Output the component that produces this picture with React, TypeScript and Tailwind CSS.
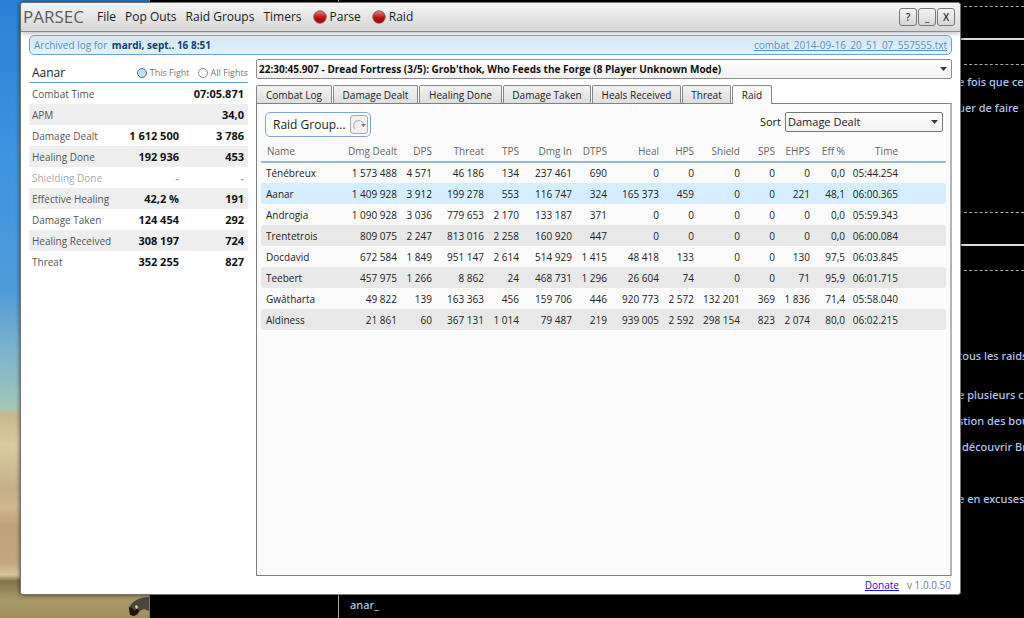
import clsx from 'clsx';
import { useState } from 'react';
import type { ReactNode } from 'react';

const MENU = ['File', 'Pop Outs', 'Raid Groups', 'Timers'];

const TABS = [
  { label: 'Combat Log', width: 'w-[76px]' },
  { label: 'Damage Dealt', width: 'w-[85px]' },
  { label: 'Healing Done', width: 'w-[83px]' },
  { label: 'Damage Taken', width: 'w-[88px]' },
  { label: 'Heals Received', width: 'w-[89px]' },
  { label: 'Threat', width: 'w-[49px]' },
  { label: 'Raid', width: 'w-[40px]' },
];

const STATS = [
  { label: 'Combat Time', total: '', rate: '07:05.871' },
  { label: 'APM', total: '', rate: '34,0' },
  { label: 'Damage Dealt', total: '1 612 500', rate: '3 786' },
  { label: 'Healing Done', total: '192 936', rate: '453' },
  { label: 'Shielding Done', total: '-', rate: '-', muted: true },
  { label: 'Effective Healing', total: '42,2 %', rate: '191' },
  { label: 'Damage Taken', total: '124 454', rate: '292' },
  { label: 'Healing Received', total: '308 197', rate: '724' },
  { label: 'Threat', total: '352 255', rate: '827' },
];

const COLUMNS = [
  { label: 'Name', width: 'w-[86px]' },
  { label: 'Dmg Dealt', width: 'w-[50px]' },
  { label: 'DPS', width: 'w-[35px]' },
  { label: 'Threat', width: 'w-[52px]' },
  { label: 'TPS', width: 'w-[35px]' },
  { label: 'Dmg In', width: 'w-[53px]' },
  { label: 'DTPS', width: 'w-[35px]' },
  { label: 'Heal', width: 'w-[52px]' },
  { label: 'HPS', width: 'w-[35px]' },
  { label: 'Shield', width: 'w-[46px]' },
  { label: 'SPS', width: 'w-[35px]' },
  { label: 'EHPS', width: 'w-[35px]' },
  { label: 'Eff %', width: 'w-[35px]' },
  { label: 'Time', width: 'w-[53px]' },
];

const RAIDERS = [
  ['Ténébreux', '1 573 488', '4 571', '46 186', '134', '237 461', '690', '0', '0', '0', '0', '0', '0,0', '05:44.254'],
  ['Aanar', '1 409 928', '3 912', '199 278', '553', '116 747', '324', '165 373', '459', '0', '0', '221', '48,1', '06:00.365'],
  ['Androgia', '1 090 928', '3 036', '779 653', '2 170', '133 187', '371', '0', '0', '0', '0', '0', '0,0', '05:59.343'],
  ['Trentetrois', '809 075', '2 247', '813 016', '2 258', '160 920', '447', '0', '0', '0', '0', '0', '0,0', '06:00.084'],
  ['Docdavid', '672 584', '1 849', '951 147', '2 614', '514 929', '1 415', '48 418', '133', '0', '0', '130', '97,5', '06:03.845'],
  ['Teebert', '457 975', '1 266', '8 862', '24', '468 731', '1 296', '26 604', '74', '0', '0', '71', '95,9', '06:01.715'],
  ['Gwâtharta', '49 822', '139', '163 363', '456', '159 706', '446', '920 773', '2 572', '132 201', '369', '1 836', '71,4', '05:58.040'],
  ['Aldiness', '21 861', '60', '367 131', '1 014', '79 487', '219', '939 005', '2 592', '298 154', '823', '2 074', '80,0', '06:02.215'],
];

const PLAYER = 'Aanar';

function RecordDot() {
  return (
    <svg aria-hidden="true" className="size-[14px]" viewBox="0 0 14 14">
      <defs>
        <linearGradient id="record" x1="0" x2="0" y1="0" y2="1">
          <stop offset="0" stopColor="#e98a8a" />
          <stop offset="0.4" stopColor="#d02a2a" />
          <stop offset="0.6" stopColor="#b80c0c" />
          <stop offset="1" stopColor="#a30808" />
        </linearGradient>
      </defs>
      <circle cx="7" cy="7" fill="url(#record)" r="6.2" stroke="#7d4a4a" strokeWidth="0.9" />
    </svg>
  );
}

function Caret() {
  return (
    <svg
      aria-hidden="true"
      className="pointer-events-none absolute top-2 right-[5px] h-1 w-[7px]"
      viewBox="0 0 7 4"
    >
      <path d="M0 0h7L3.5 4z" fill="#3c3c3c" />
    </svg>
  );
}

function WindowButton({ label, children }: { label: string; children: ReactNode }) {
  return (
    <button
      aria-label={label}
      className="flex h-[18px] w-[18px] items-center justify-center rounded-[3px] border border-[#777] bg-linear-to-b from-[#f4f4f4] to-[#d6d6d6] text-[10px] font-semibold leading-none text-[#333]"
      type="button"
    >
      {children}
    </button>
  );
}

function TitleBar() {
  return (
    <header className="flex h-[29px] shrink-0 items-center rounded-t-[3px] border-b border-[#8a8a8a] bg-linear-to-b from-[#f5f5f5] to-[#d6d6d6] pr-[5px] pl-0.5 shadow-[0_2px_4px_rgba(0,0,0,0.22)]">
      <h1 className="w-[74px] text-[17px] leading-5 text-[#5c5c5c]">PARSEC</h1>
      <nav className="flex items-center gap-[9px] text-[12px] text-[#1c1c1c]">
        {MENU.map((item) => (
          <button key={item} type="button">
            {item}
          </button>
        ))}
        <button className="ml-0.5 flex items-center gap-[3px]" type="button">
          <RecordDot />
          Parse
        </button>
        <button className="ml-0.5 flex items-center gap-[3px]" type="button">
          <RecordDot />
          Raid
        </button>
      </nav>
      <div className="ml-auto flex gap-px">
        <WindowButton label="Help">?</WindowButton>
        <WindowButton label="Minimize">_</WindowButton>
        <WindowButton label="Close">X</WindowButton>
      </div>
    </header>
  );
}

function ScopeRadio({
  label,
  checked,
  onChange,
}: {
  label: string;
  checked: boolean;
  onChange: () => void;
}) {
  return (
    <label className="flex items-center gap-[3px]">
      <input
        checked={checked}
        className="size-[10px] appearance-none rounded-full border border-[#8a8a8a] bg-white checked:border-[#56708a] checked:bg-[#c3dcf0]"
        name="scope"
        onChange={onChange}
        type="radio"
      />
      {label}
    </label>
  );
}

function StatsPanel() {
  const [scope, setScope] = useState('this');

  return (
    <aside className="w-[219px] shrink-0">
      <div className="flex h-[24px] items-center justify-between border-b border-[#6c9acb] pt-1 pl-[3px]">
        <h2 className="text-[12px] text-[#222]">Aanar</h2>
        <div className="flex gap-2 text-[9px] text-[#777]">
          <ScopeRadio
            checked={scope === 'this'}
            label="This Fight"
            onChange={() => setScope('this')}
          />
          <ScopeRadio
            checked={scope === 'all'}
            label="All Fights"
            onChange={() => setScope('all')}
          />
        </div>
      </div>
      <table className="w-full table-fixed text-[11px] leading-4">
        <tbody>
          {STATS.map((stat) => (
            <tr
              className={clsx(
                'h-[21px] even:bg-[#eee]',
                stat.muted ? 'text-[#aaa]' : 'text-[#555]'
              )}
              key={stat.label}
            >
              <th
                className="w-[97px] pl-[3px] text-left text-[10px] font-normal whitespace-nowrap"
                scope="row"
              >
                {stat.label}
              </th>
              <td
                className={clsx(
                  'w-[53px] text-right font-bold whitespace-nowrap',
                  !stat.muted && 'text-[#111]'
                )}
              >
                {stat.total}
              </td>
              <td
                className={clsx(
                  'pr-1 text-right font-bold whitespace-nowrap',
                  !stat.muted && 'text-[#111]'
                )}
              >
                {stat.rate}
              </td>
            </tr>
          ))}
        </tbody>
      </table>
    </aside>
  );
}

function RaidTable() {
  return (
    <table className="w-full table-fixed text-[10px] leading-4 whitespace-nowrap">
      <thead>
        <tr className="h-[21px] border-b-2 border-[#94b8e0] text-[#666]">
          {COLUMNS.map((column) => (
            <th
              className={clsx(
                column.width,
                'p-0 text-right font-normal first:pl-[6px] first:text-left'
              )}
              key={column.label}
              scope="col"
            >
              {column.label}
            </th>
          ))}
          <td />
        </tr>
      </thead>
      <tbody>
        {RAIDERS.map((raider) => (
          <tr className="group h-[21px] text-[#222]" key={raider[0]}>
            {raider.map((value, index) => (
              <td
                className={clsx(
                  'p-0 text-right first:rounded-l-[3px] first:pl-[5px] first:text-left',
                  raider[0] === PLAYER ? 'bg-[#d4eeff]' : 'group-even:bg-[#e8e8e8]'
                )}
                key={COLUMNS[index].label}
              >
                {value}
              </td>
            ))}
            <td
              className={clsx(
                'rounded-r-[3px]',
                raider[0] === PLAYER ? 'bg-[#d4eeff]' : 'group-even:bg-[#e8e8e8]'
              )}
            />
          </tr>
        ))}
      </tbody>
    </table>
  );
}

function RaidToolbar() {
  return (
    <div className="flex items-start justify-between pr-[3px] pl-1">
      <div className="flex h-[25px] items-center gap-1 rounded-[5px] border border-[#7ba6d8] bg-white pr-0.5 pl-[7px]">
        <button className="text-[12px] text-[#222]" type="button">
          Raid Group...
        </button>
        <button
          aria-label="Refresh raid group"
          className="flex h-[19px] w-[18px] items-center justify-center rounded-[3px] border border-[#aaa] bg-[#f1f1f1]"
          type="button"
        >
          <svg aria-hidden="true" className="h-3 w-[14px] shrink-0" viewBox="0 0 14 12">
            <path d="M3 10A5 5 0 1 1 11.500 5.500" fill="none" stroke="#bdbdbd" strokeWidth="1.300" />
            <path d="M9 5h5l-2.500 3z" fill="#777" />
          </svg>
        </button>
      </div>
      <div className="flex items-center gap-1 text-[11px] text-[#222]">
        <label htmlFor="sort">Sort</label>
        <div className="relative">
          <select
            className="block h-[20px] w-[158px] appearance-none rounded-[2px] border border-[#777] bg-linear-to-b from-[#fcfcfc] to-[#f2f2f2] px-0.5 text-[11px] leading-4"
            defaultValue="Damage Dealt"
            id="sort"
          >
            <option>Damage Dealt</option>
            <option>Healing Done</option>
            <option>Threat</option>
          </select>
          <Caret />
        </div>
      </div>
    </div>
  );
}

function FightPanel() {
  const [tab, setTab] = useState('Raid');

  return (
    <main className="flex min-w-0 flex-1 flex-col">
      <div className="relative">
        <select
          aria-label="Fight"
          className="block h-5 w-full appearance-none rounded-[2px] border border-[#8c8c8c] bg-linear-to-b from-white to-[#f2f2f2] px-0.5 text-[10px] leading-4 font-bold text-[#111]"
        >
          <option>
            22:30:45.907 - Dread Fortress (3/5): Grob'thok, Who Feeds the Forge (8 Player Unknown Mode)
          </option>
        </select>
        <Caret />
      </div>
      <div className="mt-[6px] flex gap-px" role="tablist">
        {TABS.map(({ label, width }) => (
          <button
            aria-selected={tab === label}
            className={clsx(
              width,
              'h-[18px] rounded-t-[2px] border border-b-0 border-[#888] text-center text-[10px] leading-4 whitespace-nowrap text-[#222]',
              tab === label
                ? 'z-10 -mb-px h-[19px] bg-[#fafafa]'
                : 'bg-linear-to-b from-[#f2f2f2] to-[#dedede]'
            )}
            key={label}
            onClick={() => setTab(label)}
            role="tab"
            type="button"
          >
            {label}
          </button>
        ))}
      </div>
      <section className="flex flex-1 flex-col border border-r-2 border-[#808080] border-r-[#b4b4b4] bg-[#fafafa] px-1 pt-2">
        <RaidToolbar />
        <div className="mt-1">
          <RaidTable />
        </div>
      </section>
    </main>
  );
}

function ParsecWindow() {
  return (
    <div className="absolute top-0.5 right-[63px] bottom-[23px] left-5 flex flex-col rounded-[3px] border border-[#777] bg-white shadow-[0_0_4px_rgba(0,0,0,0.6)]">
      <TitleBar />
      <div className="flex flex-1 flex-col px-2 pt-[3px]">
        <div className="z-10 flex h-5 items-center justify-between rounded-[5px] border border-[#6fa0d2] bg-linear-to-b from-[#d0e6f3] to-[#e0f4ff] px-1 text-[10px] text-[#5d90c0]">
          <p>
            Archived log for{' '}
            <strong className="ml-0.5 text-[#0f3f70]">mardi, sept.. 16 8:51</strong>
          </p>
          <a className="underline" href="#log">
            combat_2014-09-16_20_51_07_557555.txt
          </a>
        </div>
        <div className="flex flex-1 gap-2 pt-1">
          <StatsPanel />
          <FightPanel />
        </div>
      </div>
      <footer className="flex h-[18px] shrink-0 items-center justify-end gap-2 pr-[9px] text-[10px]">
        <a className="text-[#1414e0] underline" href="#donate">
          Donate
        </a>
        <span className="text-[#777]">v 1.0.0.50</span>
      </footer>
    </div>
  );
}

function Desktop() {
  return (
    <div className="flex w-[150px] shrink-0 items-end justify-end border-r border-[#777] bg-[linear-gradient(to_bottom,#2b80d8_0,#3f93e0_25%,#4f9bd8_47%,#7db4cc_57%,#a2c7b8_66%,#c9b68c_67%,#dccba0_72%,#c4b08a_79%,#cdb98c_82%,#bfa27c_85%,#c2a782_91%,#d6c59a_93%,#85754a_94%,#a8996a_97%,#a08f5c_100%)]">
      <svg aria-hidden="true" className="h-[22px] w-[21px]" viewBox="0 0 21 22">
        <path
          d="M21 1C11 1 4 5 1 12l1 5 3 3 4-1 3-4 4-2 5 2z"
          fill="#4a463c"
        />
        <path d="M1 11l3 1 3 3 2-3 2 3-2 3-3 2-4-1z" fill="#1d120d" />
        <path d="M7 10l2-1 1 3-2 1z" fill="#d8cfae" />
      </svg>
    </div>
  );
}

function Dashes() {
  return <div className="ml-[6px] border-t border-dashed border-[#aaa]" />;
}

function Console() {
  return (
    <div className="flex min-w-0 flex-1 bg-black font-['Noto_Sans',sans-serif] text-[11px] leading-[13px] font-medium text-[#b4c6f0]">
      <div className="w-[189px] shrink-0 border-r border-[#aaa]" />
      <div className="flex min-w-0 flex-1 items-end pb-[7px] pl-[11px]">anar_</div>
      <div className="w-[66px] shrink-0 overflow-hidden pt-[6px] whitespace-nowrap">
        <Dashes />
        <div className="mt-[31px] h-0.5 bg-[#ddd]" />
        <div className="mt-6">
          <Dashes />
        </div>
        <p className="mt-[10px]">e fois que ce</p>
        <p className="mt-[13px]">uer de faire</p>
        <div className="mt-[98px]">
          <Dashes />
        </div>
        <div className="mt-[31px] h-0.5 bg-[#ddd]" />
        <div className="mt-6">
          <Dashes />
        </div>
        <p className="mt-[78px]">tous les raids</p>
        <p className="mt-[26px]">e plusieurs c</p>
        <p className="mt-[13px]">stion des bou</p>
        <p className="mt-[13px] pl-1">découvrir Br</p>
        <p className="mt-[39px]">e en excuses</p>
      </div>
    </div>
  );
}

export default function App() {
  return (
    <div className="relative flex min-h-screen overflow-hidden font-['Open_Sans','Noto_Sans',sans-serif]">
      <Desktop />
      <Console />
      <ParsecWindow />
    </div>
  );
}
